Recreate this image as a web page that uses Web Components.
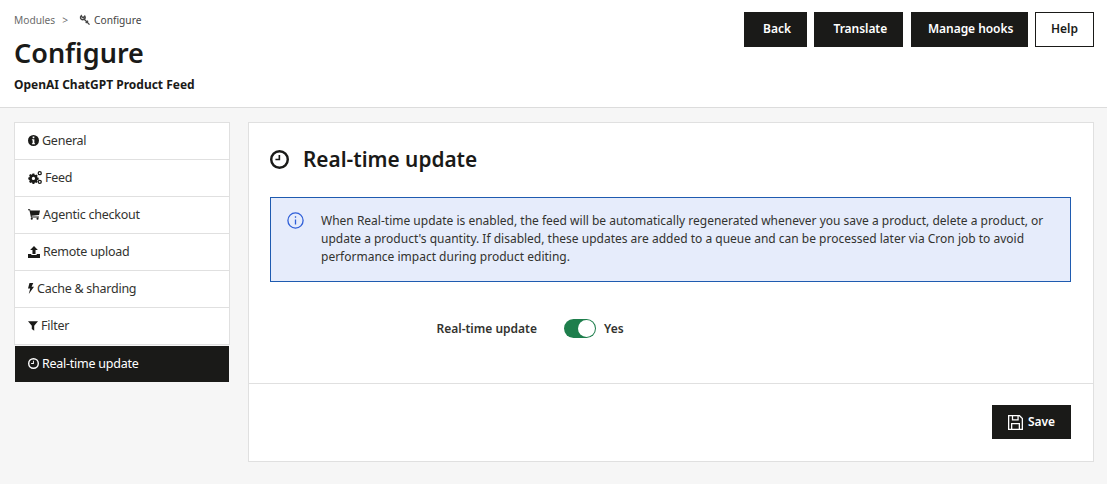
<!DOCTYPE html>
<html>
<head>
<meta charset="utf-8">
<title>Configure</title>
<style>
  html, body { margin: 0; padding: 0; }
  body {
    background: #f6f6f6;
    color: #1a1a18;
    font-family: "Noto Sans", "Liberation Sans", sans-serif;
    font-size: 13px;
  }
  .layout {
    display: flex;
    align-items: flex-start;
    gap: 18px;
    padding: 14px 13px 0 14px;
  }
</style>
</head>
<body>
<page-header></page-header>
<div class="layout">
  <side-menu>
    <menu-item icon="info">General</menu-item>
    <menu-item icon="cogs">Feed</menu-item>
    <menu-item icon="cart">Agentic checkout</menu-item>
    <menu-item icon="upload">Remote upload</menu-item>
    <menu-item icon="bolt">Cache &amp; sharding</menu-item>
    <menu-item icon="filter">Filter</menu-item>
    <menu-item icon="clock" active>Real-time update</menu-item>
  </side-menu>
  <main-panel heading="Real-time update">
    <info-alert>When Real-time update is enabled, the feed will be automatically regenerated whenever you save a product, delete a product, or update a product's quantity. If disabled, these updates are added to a queue and can be processed later via Cron job to avoid performance impact during product editing.</info-alert>
    <switch-row label="Real-time update" value="Yes"></switch-row>
    <dark-button slot="footer" icon="save">Save</dark-button>
  </main-panel>
</div>

<script>
// each icon: its cropped viewBox, its size on screen, its shapes
const ICONS = {
  info: { box: '1 1 14 14', w: 11, h: 11, d: '<path fill-rule="evenodd" d="M8 1a7 7 0 1 0 0 14A7 7 0 0 0 8 1zM6.9 3h2.2v2.1H6.9zM6 6.4h3.1v5.1H10v1.4H6v-1.4h.9V7.8H6z"/>' },
  cogs: { box: '0 0.8 15.5 14.4', w: 14, h: 13, d: '<path fill-rule="evenodd" d="M5 3.6h2l.3 1.3 1 .4 1.1-.7 1.4 1.4-.7 1.1.4 1 1.3.3v2l-1.3.3-.4 1 .7 1.1-1.4 1.4-1.1-.7-1 .4-.3 1.2H5l-.3-1.2-1-.4-1.1.7-1.4-1.4.7-1.1-.4-1L.3 10V8l1.2-.3.4-1-.7-1.1 1.4-1.4 1.1.7 1-.4zM6 7.2a1.8 1.8 0 1 0 0 3.6 1.8 1.8 0 0 0 0-3.6z"/><path fill-rule="evenodd" d="M13 .8a2.4 2.4 0 1 0 0 4.8 2.4 2.4 0 0 0 0-4.8zm0 1.4a1 1 0 1 1 0 2 1 1 0 0 1 0-2zM13 10.4a2.4 2.4 0 1 0 0 4.8 2.4 2.4 0 0 0 0-4.8zm0 1.4a1 1 0 1 1 0 2 1 1 0 0 1 0-2z"/>' },
  cart: { box: '0.5 2.5 15 13', w: 12, h: 11, d: '<path d="M.5 2.5h2.6l.4 1.5h12l-1.2 5.6-9.3 1 .2 1h9v1.3H4.2L2.3 3.8H.5z"/><circle cx="5.2" cy="14.2" r="1.3"/><circle cx="12.4" cy="14.2" r="1.3"/>' },
  upload: { box: '1 1 14 14', w: 12, h: 12, d: '<path d="M8 1l4.5 4.6H9.8v4.6H6.2V5.6H3.5z"/><path d="M1 10.4h3.9v1.1h6.2v-1.1H15V15H1z"/>' },
  bolt: { box: '4 1 8 14.5', w: 6, h: 11, d: '<path d="M6 1h5L8.8 6H12l-7 9.5L7 8.3H4z"/>' },
  filter: { box: '1 2 14 13', w: 10, h: 10, d: '<path d="M1 2h14L9.7 8.2V15L6.3 12.6V8.2z"/>' },
  clock: { box: '1 1 14 14', w: 11, h: 11, d: '<path fill-rule="evenodd" d="M8 1a7 7 0 1 0 0 14A7 7 0 0 0 8 1zm0 1.8a5.2 5.2 0 1 1 0 10.4A5.2 5.2 0 0 1 8 2.8z"/><path d="M7.3 4.6h1.2v4H5V7.5h2.3z"/>' },
  save: { box: '1 1 14 14', w: 15, h: 15, d: '<path fill-rule="evenodd" d="M1 1h11l3 3v11H1zm1.2 1.2v11.6h1.6V8.4h8.4v5.4h1.6V4.5l-2.4-2.3H11v4H4.6v-4zm3.6 0v2.8h4V2.2zM5 9.6v4.2h6V9.6z"/>' }
};
const iconSvg = name => {
  const i = ICONS[name];
  return `<svg viewBox="${i.box}" width="${i.w}" height="${i.h}">${i.d}</svg>`;
};

class PageHeader extends HTMLElement {
  constructor() {
    super();
    this.attachShadow({ mode: 'open' }).innerHTML = `
      <style>
        :host {
          display: flex;
          justify-content: space-between;
          align-items: flex-start;
          height: 107px;
          background: #fff;
          border-bottom: 1px solid #dcdcdc;
          padding: 0 13px 0 14px;
        }
        .crumbs {
          display: flex;
          align-items: center;
          height: 14px;
          margin-top: 13px;
          font-size: 10.2px;
          color: #6b6b6b;
        }
        .sep { margin: 0 11px 0 7px; }
        .crumbs svg { width: 12px; height: 12px; margin-right: 3px; }
        .current { color: #444; }
        h1 {
          margin: 7px 0 0;
          font-size: 27px;
          line-height: 38px;
          font-weight: 600;
        }
        .sub {
          margin-top: 5px;
          font-size: 12px;
          line-height: 16px;
          font-weight: 700;
        }
        .actions {
          display: flex;
          gap: 7.33px;
          margin-top: 12px;
        }
      </style>
      <div>
        <div class="crumbs">
          <span>Modules</span><span class="sep">&gt;</span>
          <svg viewBox="0 0 16 16" fill="none" stroke="#444" stroke-width="1.8"><path d="M7 7L14 14.2M3 2.2a3.4 3.4 0 0 0-.9 3.6 3.4 3.4 0 0 0 4.4 1.5 3.4 3.4 0 0 0 1.2-4.6L5.6 5 3.8 3.6z"/><path d="M9 12l3-3"/></svg>
          <span class="current">Configure</span>
        </div>
        <h1>Configure</h1>
        <div class="sub">OpenAI ChatGPT Product Feed</div>
      </div>
      <div class="actions">
        <dark-button wide="63">Back</dark-button>
        <dark-button wide="89">Translate</dark-button>
        <dark-button wide="117">Manage hooks</dark-button>
        <dark-button wide="59" outline>Help</dark-button>
      </div>`;
  }
}
customElements.define('page-header', PageHeader);

class DarkButton extends HTMLElement {
  constructor() {
    super();
    const icon = this.getAttribute('icon');
    const outline = this.hasAttribute('outline');
    const wide = this.getAttribute('wide');
    const left = wide && !outline ? 3 : 0;
    this.attachShadow({ mode: 'open' }).innerHTML = `
      <style>
        :host {
          display: inline-flex;
          align-items: center;
          justify-content: center;
          gap: 5px;
          box-sizing: border-box;
          height: ${wide ? 35 : 34}px;
          ${wide ? `width: ${wide}px;` : ''}
          padding: 0 ${wide ? 0 : 15}px 2px ${wide ? left : 15}px;
          background: ${outline ? '#fff' : '#1a1a18'};
          color: ${outline ? '#1a1a18' : '#fff'};
          border: 1px solid #1a1a18;
          font-size: 12px;
          font-weight: 600;
          letter-spacing: -0.05px;
        }
        svg { fill: currentColor; margin-top: 2px; }
      </style>
      ${icon ? iconSvg(icon) : ''}
      <slot></slot>`;
  }
}
customElements.define('dark-button', DarkButton);

class SideMenu extends HTMLElement {
  constructor() {
    super();
    this.attachShadow({ mode: 'open' }).innerHTML = `
      <style>
        :host { display: flex; flex-direction: column; flex: 0 0 216px; }
      </style>
      <slot></slot>`;
  }
}
customElements.define('side-menu', SideMenu);

class MenuItem extends HTMLElement {
  constructor() {
    super();
    const active = this.hasAttribute('active');
    this.attachShadow({ mode: 'open' }).innerHTML = `
      <style>
        :host {
          display: flex;
          align-items: center;
          gap: 3px;
          box-sizing: border-box;
          height: 38px;
          padding: 0 13px 2px;
          background: #fff;
          border: 1px solid #e0e0e0;
          margin-top: -1px;
          font-size: 12.5px;
          letter-spacing: -0.25px;
          color: #33332f;
        }
        :host(:first-child) { margin-top: 0; }
        :host([active]) {
          background: #1a1a18;
          color: #fff;
          border-color: #f6f6f6;
          margin-top: 0;
        }
        svg { fill: ${active ? '#fff' : '#1a1a18'}; flex: none; margin-top: 1px; }
      </style>
      ${iconSvg(this.getAttribute('icon'))}
      <slot></slot>`;
  }
}
customElements.define('menu-item', MenuItem);

class MainPanel extends HTMLElement {
  constructor() {
    super();
    this.attachShadow({ mode: 'open' }).innerHTML = `
      <style>
        :host {
          display: block;
          flex: 1;
          height: 340px;
          box-sizing: border-box;
          background: #fff;
          border: 1px solid #e0e0e0;
        }
        .body { height: 260px; box-sizing: border-box; padding: 0 22px 0 21px; }
        h2 {
          display: flex;
          align-items: center;
          gap: 14px;
          box-sizing: border-box;
          height: 74px;
          padding-bottom: 2px;
          margin: 0;
          font-size: 20.8px;
          font-weight: 600;
        }
        h2 svg { fill: #1a1a18; }
        .foot {
          display: flex;
          justify-content: flex-end;
          border-top: 1px solid #e0e0e0;
          padding: 21px 22px 0 0;
        }
      </style>
      <div class="body">
        <h2><svg viewBox="${ICONS.clock.box}" width="19" height="19">${ICONS.clock.d}</svg>${this.getAttribute('heading')}</h2>
        <slot></slot>
      </div>
      <div class="foot"><slot name="footer"></slot></div>`;
  }
}
customElements.define('main-panel', MainPanel);

class InfoAlert extends HTMLElement {
  constructor() {
    super();
    this.attachShadow({ mode: 'open' }).innerHTML = `
      <style>
        :host {
          display: flex;
          gap: 17px;
          box-sizing: border-box;
          height: 85px;
          padding: 14px 16px 0 16px;
          background: #e6ecfb;
          border: 1px solid #1f5bb0;
          font-size: 12px;
          line-height: 18px;
          color: #33332f;
        }
        svg { flex: none; width: 17px; height: 17px; fill: none; stroke: #2f5fd8; stroke-width: 1.3; }
      </style>
      <svg viewBox="0 0 17 17"><circle cx="8.5" cy="8.5" r="7.6"/><path d="M8.5 7.4v5M8.5 4.3v1.5"/></svg>
      <div><slot></slot></div>`;
  }
}
customElements.define('info-alert', InfoAlert);

class SwitchRow extends HTMLElement {
  constructor() {
    super();
    this.attachShadow({ mode: 'open' }).innerHTML = `
      <style>
        :host {
          display: flex;
          align-items: center;
          margin-top: 36px;
          height: 20px;
          font-size: 12px;
          font-weight: 600;
          color: #33332f;
        }
        .label { width: 267px; text-align: right; margin-right: 27px; }
        .track {
          display: flex;
          justify-content: flex-end;
          align-items: center;
          box-sizing: border-box;
          width: 32px;
          height: 19px;
          padding-right: 1px;
          border-radius: 10px;
          background: #1e7e4c;
          margin-right: 8px;
        }
        .knob { width: 17px; height: 17px; border-radius: 50%; background: #fff; }
      </style>
      <span class="label">${this.getAttribute('label')}</span>
      <span class="track"><span class="knob"></span></span>
      <span>${this.getAttribute('value')}</span>`;
  }
}
customElements.define('switch-row', SwitchRow);
</script>
</body>
</html>
